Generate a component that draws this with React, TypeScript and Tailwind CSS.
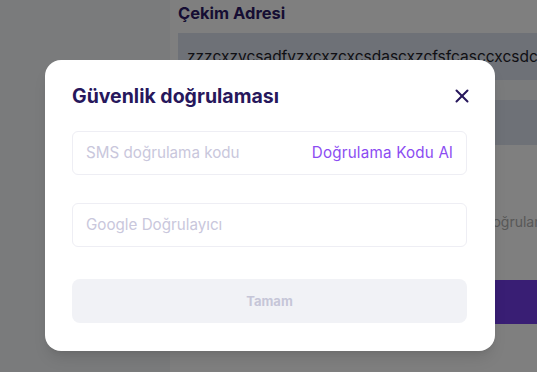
import { X } from "lucide-react";

const FONT = { fontFamily: "Inter, 'Noto Sans', sans-serif" };

export default function App() {
  return (
    <div className="relative h-[372px] w-[537px] overflow-hidden bg-white" style={FONT}>
      {/* Page behind the dialog */}
      <div className="flex h-full">
        <aside className="w-[170px] shrink-0 bg-[#f5f6f9]" />
        <main className="flex min-w-0 flex-1 flex-col pl-[8px] pt-[1px]">
          <h2 className="text-[16.5px] font-bold leading-[24px] text-[#2c1a66]">Çekim Adresi</h2>
          <div className="mt-[8px] flex h-[47px] items-center overflow-hidden whitespace-nowrap bg-[#dde2ee] pl-[9px] text-[15.5px] text-[#1f1f2a]">
            zzzcxzvcsadfvzxcxzcxcsdascxzcfsfcasccxcsdcfascxzc
          </div>
          <div className="h-[20px] bg-[#f5f6f9]" />
          <div className="h-[45px] bg-[#dde2ee]" />
          <div className="mt-[66px] overflow-hidden whitespace-nowrap pl-[253px] text-[14px] text-[#b0b0b0]">
            Google Doğrulama
          </div>
          <div className="mt-[48px] h-[44px] rounded-l-[8px] bg-[#733ce8]" />
        </main>
      </div>

      {/* Overlay + dialog */}
      <div className="absolute inset-0 bg-black/50">
        <div className="ml-[45px] mt-[60px] flex w-[450px] flex-col rounded-[16px] bg-white pb-[28px] pl-[27px] pr-[28px] pt-[22px] shadow-lg">
          <div className="flex items-center justify-between">
            <h1 className="text-[19.5px] font-bold leading-[28px] text-[#27175c]">Güvenlik doğrulaması</h1>
            <button type="button" className="-mr-[6px] text-[#27175c]" aria-label="Kapat">
              <X size={22} strokeWidth={2.2} />
            </button>
          </div>

          <div className="mt-[21px] flex h-[44px] items-center justify-between rounded-[6px] border border-[#eeeef4] pl-[13px] pr-[13px]">
            <span className="text-[15.2px] text-[#c9c7dc]">SMS doğrulama kodu</span>
            <span className="text-[15.2px] tracking-[0.2px] text-[#8c4cf2]">Doğrulama Kodu Al</span>
          </div>

          <div className="mt-[28px] flex h-[44px] items-center rounded-[6px] border border-[#eeeef4] px-[13px]">
            <span className="text-[15.2px] text-[#c9c7dc]">Google Doğrulayıcı</span>
          </div>

          <button
            type="button"
            className="mt-[32px] flex h-[44px] items-center justify-center rounded-[8px] bg-[#f1f2f6] pt-[2px] text-[13px] font-bold text-[#c6c6d8]"
          >
            Tamam
          </button>
        </div>
      </div>
    </div>
  );
}
